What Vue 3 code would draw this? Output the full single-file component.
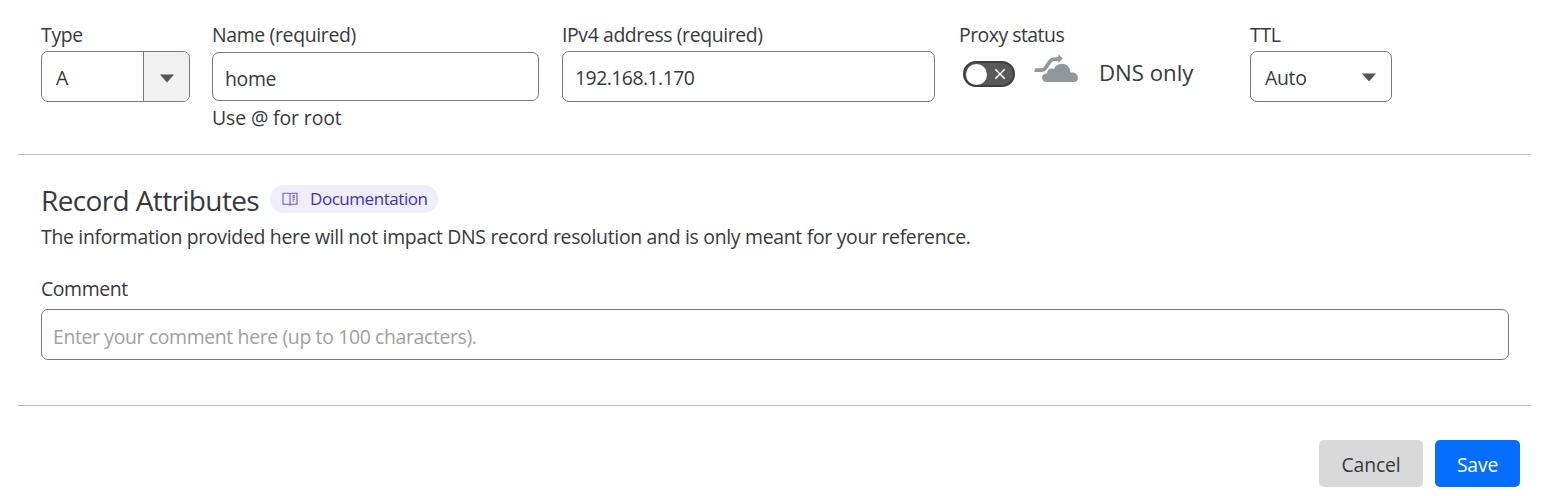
<script setup>
import { ref } from 'vue'

const name = ref('home')
const address = ref('192.168.1.170')
const comment = ref('')
</script>

<template>
  <form class="panel" @submit.prevent>
    <section class="fields">
      <div class="field type">
        <label>Type</label>
        <div class="box select">
          <span class="value">A</span>
          <span class="handle">
            <svg width="14" height="9" viewBox="0 0 14 9"><path d="M0 .5h14L7 8.5z" fill="#555" /></svg>
          </span>
        </div>
      </div>

      <div class="field name">
        <label class="label-name">Name (required)</label>
        <input v-model="name" class="box home" />
        <span class="hint">Use @ for root</span>
      </div>

      <div class="field address">
        <label class="label-address">IPv4 address (required)</label>
        <input v-model="address" class="box ip" />
      </div>

      <div class="field proxy">
        <label class="label-proxy">Proxy status</label>
        <div class="status">
          <span class="toggle">
            <span class="knob"></span>
            <svg width="12" height="12" viewBox="0 0 12 12"><path d="M1.3 1.3l9.4 9.4M10.7 1.3l-9.4 9.4" stroke="#fff" stroke-width="1.5" /></svg>
          </span>
          <svg class="cloud" width="44" height="30" viewBox="0 0 44 30" fill="#92979b">
            <path d="M12.5 28.1C10 28.1 8.1 26.2 8.1 23.8c0-2.5 1.8-4.3 4.3-4.3h.9c-.3-2.8 1.6-4.9 4.3-4.9.9 0 1.7.2 2.4.7 1.2-3.4 4.2-5.6 7.7-5.6 4.6 0 8.3 3.3 8.7 8l.1.9c.5-.2 1-.2 1.5-.2 3.3 0 5.8 2.1 5.9 5 .1 2.5-1.4 4.7-3.8 4.7z" />
            <path d="M.2 18l1.3-3.7h5.2c1.8 0 2.6-.5 3.6-1.9l3.7-5.3c2-2.8 4-3.8 7-3.8h3.3V.2l4.5 4.3-4.5 4.4V7h-3c-2 0-3.1.6-4.3 2.3l-3.8 5.4C11.6 17.1 9.8 18 7.2 18z" />
          </svg>
          <span class="mode">DNS only</span>
        </div>
      </div>

      <div class="field ttl">
        <label>TTL</label>
        <div class="box auto">
          <span>Auto</span>
          <svg width="14" height="9" viewBox="0 0 14 9"><path d="M0 .5h14L7 8.5z" fill="#555" /></svg>
        </div>
      </div>
    </section>

    <section class="attributes">
      <div class="title-row">
        <h2>Record Attributes</h2>
        <a class="docs">
          <svg width="16" height="14" viewBox="0 0 16 14" fill="none" stroke="#6a5bd0" stroke-width="1.1">
            <path d="M1 1.2h5.2c1 0 1.8.5 1.8 1.3 0-.8.8-1.3 1.8-1.3H15v11H9.8c-1 0-1.8.4-1.8 1.2 0-.8-.8-1.2-1.8-1.2H1zM8 2.5v11" />
            <path d="M10.6 3.6h2.3M10.6 5.4h2.3M10.6 7.2h2.3M10.6 9h1.4" />
          </svg>
          <span>Documentation</span>
        </a>
      </div>
      <p>The information provided here will not impact DNS record resolution and is only meant for your reference.</p>
      <label class="label-comment">Comment</label>
      <input v-model="comment" class="box comment" placeholder="Enter your comment here (up to 100 characters)." />
    </section>

    <footer>
      <button type="button" class="cancel">Cancel</button>
      <button type="submit" class="save">Save</button>
    </footer>
  </form>
</template>

<style>
body {
  background: #fff;
}
</style>

<style scoped>
.panel {
  box-sizing: border-box;
  width: 1513px;
  height: 496px;
  margin-left: 18px;
  color: #36393d;
  font: 19.4px/25px "Open Sans", "Noto Sans", sans-serif;
  letter-spacing: -0.295px;
}

.fields {
  box-sizing: border-box;
  display: flex;
  height: 155px;
  padding: 22px 0 0 23px;
  border-bottom: 1px solid #bfbfbf;
}

.field {
  display: flex;
  flex-direction: column;
  align-items: flex-start;
}

label {
  display: block;
  height: 25px;
  white-space: nowrap;
}

.box {
  box-sizing: border-box;
  width: 100%;
  height: 51px;
  margin: 4px 0 0;
  border: 1px solid #797979;
  border-radius: 7px;
  background: #fff;
  color: #36393d;
  font: inherit;
  letter-spacing: inherit;
  outline: none;
}

.type {
  width: 149px;
  margin-right: 22px;
}

.select {
  display: flex;
  overflow: hidden;
}

.value {
  flex: 1;
  padding: 13px 0 0 14px;
}

.handle {
  display: flex;
  align-items: center;
  justify-content: center;
  width: 45px;
  padding-top: 4px;
  border-left: 1px solid #797979;
  background: #f1f1f1;
}

.name {
  width: 327px;
  margin-right: 23px;
}

.label-name {
  letter-spacing: -0.33px;
}

.home {
  height: 49px;
  margin-top: 5px;
  padding: 4px 12px 0;
  letter-spacing: -0.3px;
}

.hint {
  margin-top: 4px;
  letter-spacing: -0.1px;
}

.address {
  width: 373px;
  margin-right: 24px;
}

.label-address {
  letter-spacing: -0.38px;
}

.ip {
  padding: 2px 12px 0;
  letter-spacing: -0.52px;
}

.proxy {
  width: 291px;
}

.label-proxy {
  letter-spacing: -0.5px;
}

.status {
  display: flex;
  align-items: center;
  margin-top: 11px;
  padding-left: 4px;
}

.toggle {
  box-sizing: border-box;
  display: flex;
  align-items: center;
  justify-content: space-between;
  width: 52px;
  height: 26px;
  margin-top: 2px;
  padding: 0 7px 0 1px;
  border: 2px solid #3d3d3d;
  border-radius: 13px;
  background: #595959;
}

.knob {
  width: 21px;
  height: 21px;
  border-radius: 50%;
  background: #fff;
}

.cloud {
  margin: -8px 0 0 19px;
}

.mode {
  margin-left: 21px;
  font-size: 22.2px;
  line-height: 30px;
  letter-spacing: 0;
}

.ttl {
  width: 142px;
}

.auto {
  display: flex;
  align-items: center;
  justify-content: space-between;
  padding: 2px 15px 0 14px;
}

.attributes {
  box-sizing: border-box;
  height: 251px;
  padding: 27px 23px 0;
  border-bottom: 1px solid #b9b9b9;
}

.title-row {
  display: flex;
  align-items: flex-start;
  height: 42px;
}

h2 {
  margin: 0;
  width: 229px;
  font-size: 28px;
  font-weight: 400;
  line-height: 36px;
  letter-spacing: -0.62px;
  white-space: nowrap;
}

.docs {
  box-sizing: border-box;
  display: flex;
  align-items: center;
  gap: 12px;
  width: 168px;
  height: 28px;
  margin-top: 3px;
  padding-left: 12px;
  border-radius: 14px;
  background: #f0eefc;
  color: #4133a8;
  font-size: 17px;
  line-height: 24px;
  letter-spacing: -0.45px;
}

.docs span {
  padding-bottom: 1px;
}

p {
  margin: 0;
  white-space: nowrap;
}

.label-comment {
  margin-top: 27px;
  letter-spacing: -0.4px;
}

.comment {
  width: 1468px;
  margin-top: 8px;
  padding: 3px 12px 0 11px;
  letter-spacing: -0.35px;
}

.comment::placeholder {
  color: #a0a0a0;
}

footer {
  display: flex;
  justify-content: flex-end;
  gap: 12px;
  padding: 34px 11px 0 0;
}

button {
  height: 47px;
  padding: 2px 0 0;
  border: 0;
  border-radius: 5px;
  font: inherit;
  letter-spacing: -0.2px;
}

.cancel {
  width: 104px;
  background: #d9d9d9;
  color: #36393d;
}

.save {
  width: 85px;
  background: #056dff;
  color: #fff;
}
</style>
